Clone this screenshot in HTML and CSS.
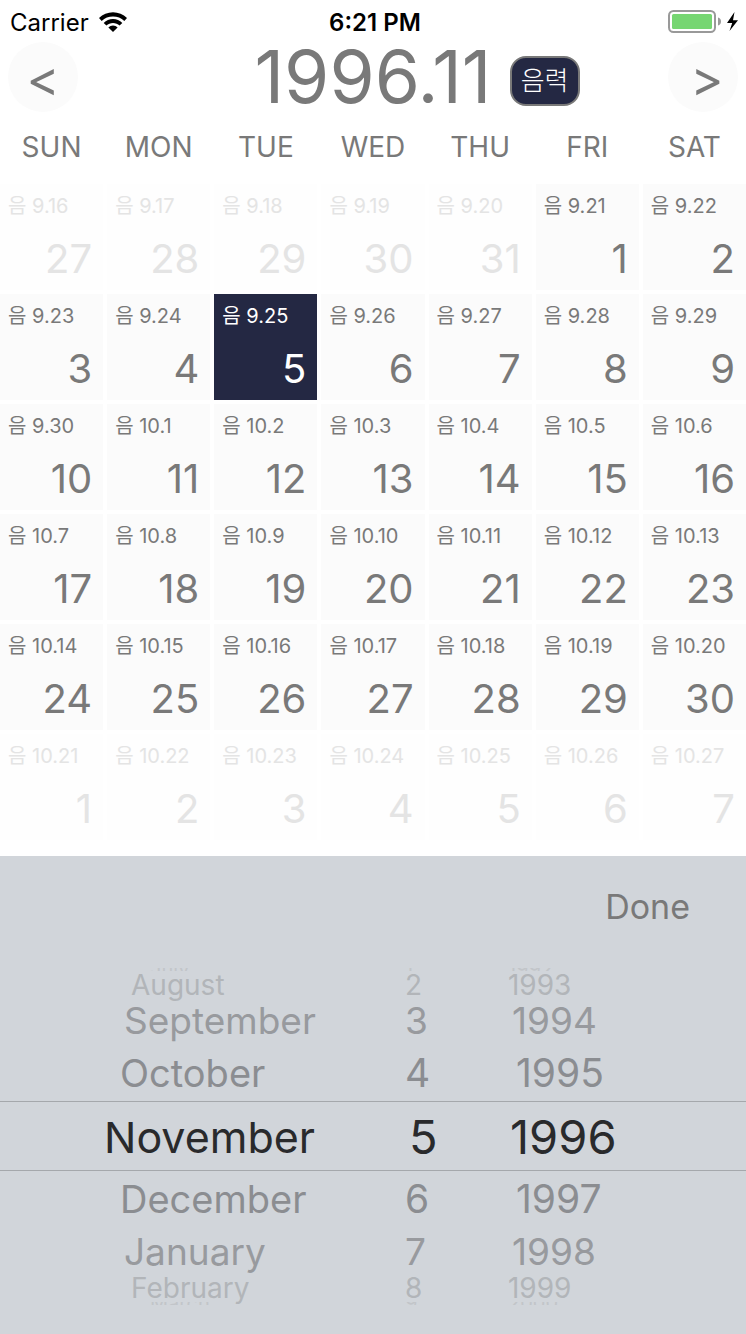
FILE: index.html
```html
<!DOCTYPE html>
<html lang="ko">
<head>
<meta charset="utf-8">
<meta name="viewport" content="width=device-width, initial-scale=1">
<title>1996.11</title>
<link rel="stylesheet" href="styles.css">
</head>
<body>
<div class="status">
  <div class="carrier">
    <span>Carrier</span>
    <svg class="wifi" viewBox="0 0 28 20" aria-hidden="true">
      <path d="M0 6.1C3.8 2.300 8.700.2 14 .2s10.200 2.100 14 5.900l-2.700 2.800C22.200 5.900 18.300 4.500 14 4.500S5.800 5.900 2.700 8.900z"/>
      <path d="M4.700 10.900C7.200 8.400 10.500 7 14 7s6.800 1.400 9.300 3.900l-2.700 2.700c-1.800-1.700-4.100-2.600-6.600-2.600s-4.800.9-6.600 2.600z"/>
      <path d="M9.400 15.400C10.600 14.100 12.200 13.400 14 13.400s3.400.7 4.600 2L14 20z"/>
    </svg>
  </div>
  <div class="clock">6:21 PM</div>
  <div class="power">
    <svg class="battery" viewBox="0 0 72 26" aria-hidden="true">
      <rect x="1" y="2" width="46" height="21" rx="4.500" fill="none" stroke="#999" stroke-width="2"/>
      <rect x="4" y="5" width="40" height="15" rx="1.500" fill="#76d672"/>
      <path d="M50 8.500c2 .5 3 2 3 4s-1 3.500-3 4z" fill="#999"/>
      <path d="M66.500 3L59 14h5.200L61.500 22 70 11.200h-5z" fill="#000"/>
    </svg>
  </div>
</div>

<header class="header">
  <button class="round" type="button" aria-label="Previous month">&lt;</button>
  <h1 class="title">1996.11</h1>
  <div class="header-end">
    <button class="lunar-toggle" type="button">음력</button>
    <button class="round next" type="button" aria-label="Next month">&gt;</button>
  </div>
</header>

<main>
<div class="weekdays">
  <span>SUN</span><span>MON</span><span>TUE</span><span>WED</span><span>THU</span><span>FRI</span><span>SAT</span>
</div>
<div class="days">
  <button class="day out" type="button"><small>음 9.16</small><b>27</b></button>
  <button class="day out" type="button"><small>음 9.17</small><b>28</b></button>
  <button class="day out" type="button"><small>음 9.18</small><b>29</b></button>
  <button class="day out" type="button"><small>음 9.19</small><b>30</b></button>
  <button class="day out" type="button"><small>음 9.20</small><b>31</b></button>
  <button class="day" type="button"><small>음 9.21</small><b>1</b></button>
  <button class="day" type="button"><small>음 9.22</small><b>2</b></button>

  <button class="day" type="button"><small>음 9.23</small><b>3</b></button>
  <button class="day" type="button"><small>음 9.24</small><b>4</b></button>
  <button class="day chosen" type="button" aria-pressed="true"><small>음 9.25</small><b>5</b></button>
  <button class="day" type="button"><small>음 9.26</small><b>6</b></button>
  <button class="day" type="button"><small>음 9.27</small><b>7</b></button>
  <button class="day" type="button"><small>음 9.28</small><b>8</b></button>
  <button class="day" type="button"><small>음 9.29</small><b>9</b></button>

  <button class="day" type="button"><small>음 9.30</small><b>10</b></button>
  <button class="day" type="button"><small>음 10.1</small><b>11</b></button>
  <button class="day" type="button"><small>음 10.2</small><b>12</b></button>
  <button class="day" type="button"><small>음 10.3</small><b>13</b></button>
  <button class="day" type="button"><small>음 10.4</small><b>14</b></button>
  <button class="day" type="button"><small>음 10.5</small><b>15</b></button>
  <button class="day" type="button"><small>음 10.6</small><b>16</b></button>

  <button class="day" type="button"><small>음 10.7</small><b>17</b></button>
  <button class="day" type="button"><small>음 10.8</small><b>18</b></button>
  <button class="day" type="button"><small>음 10.9</small><b>19</b></button>
  <button class="day" type="button"><small>음 10.10</small><b>20</b></button>
  <button class="day" type="button"><small>음 10.11</small><b>21</b></button>
  <button class="day" type="button"><small>음 10.12</small><b>22</b></button>
  <button class="day" type="button"><small>음 10.13</small><b>23</b></button>

  <button class="day" type="button"><small>음 10.14</small><b>24</b></button>
  <button class="day" type="button"><small>음 10.15</small><b>25</b></button>
  <button class="day" type="button"><small>음 10.16</small><b>26</b></button>
  <button class="day" type="button"><small>음 10.17</small><b>27</b></button>
  <button class="day" type="button"><small>음 10.18</small><b>28</b></button>
  <button class="day" type="button"><small>음 10.19</small><b>29</b></button>
  <button class="day" type="button"><small>음 10.20</small><b>30</b></button>

  <button class="day out" type="button"><small>음 10.21</small><b>1</b></button>
  <button class="day out" type="button"><small>음 10.22</small><b>2</b></button>
  <button class="day out" type="button"><small>음 10.23</small><b>3</b></button>
  <button class="day out" type="button"><small>음 10.24</small><b>4</b></button>
  <button class="day out" type="button"><small>음 10.25</small><b>5</b></button>
  <button class="day out" type="button"><small>음 10.26</small><b>6</b></button>
  <button class="day out" type="button"><small>음 10.27</small><b>7</b></button>
</div>
</main>

<section class="panel">
  <div class="toolbar"><button class="done" type="button">Done</button></div>
  <div class="picker">
    <ul class="wheel months" role="listbox" aria-label="Month">
      <li class="edge" role="option">July</li>
      <li class="far" role="option">August</li>
      <li class="mid" role="option">September</li>
      <li class="near" role="option">October</li>
      <li class="current" role="option" aria-selected="true">November</li>
      <li class="near" role="option">December</li>
      <li class="mid" role="option">January</li>
      <li class="far" role="option">February</li>
      <li class="edge" role="option">March</li>
    </ul>
    <ul class="wheel dates" role="listbox" aria-label="Day">
      <li class="edge" role="option">1</li>
      <li class="far" role="option">2</li>
      <li class="mid" role="option">3</li>
      <li class="near" role="option">4</li>
      <li class="current" role="option" aria-selected="true">5</li>
      <li class="near" role="option">6</li>
      <li class="mid" role="option">7</li>
      <li class="far" role="option">8</li>
      <li class="edge" role="option">9</li>
    </ul>
    <ul class="wheel years" role="listbox" aria-label="Year">
      <li class="edge" role="option">1992</li>
      <li class="far" role="option">1993</li>
      <li class="mid" role="option">1994</li>
      <li class="near" role="option">1995</li>
      <li class="current" role="option" aria-selected="true">1996</li>
      <li class="near" role="option">1997</li>
      <li class="mid" role="option">1998</li>
      <li class="far" role="option">1999</li>
      <li class="edge" role="option">2000</li>
    </ul>
  </div>
</section>
</body>
</html>
```
FILE: styles.css
```css
* { box-sizing: border-box; }

body {
  margin: 0;
  min-height: 100vh;
  display: flex;
  flex-direction: column;
  background: #fff;
  color: #797979;
  font-family: Inter, "Noto Sans CJK KR", sans-serif;
}

button {
  margin: 0;
  padding: 0;
  border: 0;
  background: none;
  color: inherit;
  font: inherit;
  cursor: pointer;
}

/* Status bar */
.status {
  display: grid;
  grid-template-columns: 1fr auto 1fr;
  align-items: center;
  height: 42px;
  padding: 2px 6px 0 10px;
  color: #000;
  font-size: 24px;
}
.carrier { display: flex; align-items: center; gap: 10px; }
.wifi { width: 28px; height: 20px; }
.clock { font-weight: 600; }
.power { display: flex; justify-content: flex-end; }
.battery { width: 72px; height: 26px; }

/* Month header */
.header {
  display: grid;
  grid-template-columns: 1fr auto 1fr;
  align-items: center;
  height: 70px;
  padding: 0 8px;
}
.round {
  width: 70px;
  height: 70px;
  border-radius: 50%;
  background: #fbfbfb;
  font-size: 50px;
  line-height: 72px;
}
.next { padding-left: 8px; }
.title {
  margin: 0;
  font-size: 73px;
  font-weight: 400;
  line-height: 70px;
}
.header-end {
  display: flex;
  align-items: center;
  justify-content: space-between;
  padding-left: 18px;
}
.lunar-toggle {
  width: 70px;
  height: 50px;
  margin-top: 8px;
  border: 2px solid #797979;
  border-radius: 16px;
  background: #242843;
  color: #fff;
  font-size: 26px;
  font-weight: 300;
  line-height: 46px;
}

/* Calendar */
.weekdays, .days {
  display: grid;
  grid-template-columns: repeat(7, 1fr);
  column-gap: 4px;
}
.weekdays {
  height: 72px;
  font-size: 28px;
  line-height: 70px;
  text-align: center;
}
.days { row-gap: 4px; margin-bottom: 16px; }
.day {
  display: flex;
  flex-direction: column;
  justify-content: space-between;
  height: 106px;
  padding: 10px 11px 7px 8px;
  background: #fbfbfb;
  text-align: left;
}
.day small { font-size: 20px; font-weight: 400; line-height: 24px; white-space: nowrap; }
.day b { align-self: flex-end; font-size: 40px; font-weight: 400; line-height: 48px; }
.out { background: #fefefe; color: #e4e4e4; }
.chosen { background: #242843; color: #fff; }

/* Date picker */
.panel { flex: 1; background: #d1d5da; }
.toolbar {
  display: flex;
  justify-content: flex-end;
  padding: 27px 56px 37px;
}
.done { font-size: 34px; line-height: 48px; }
.picker {
  display: grid;
  grid-template-columns: 50% 13% 1fr;
}
.wheel { margin: 0; padding: 0; list-style: none; }
.wheel li { white-space: nowrap; }
.wheel .edge { height: 3px; padding-left: 38px; overflow: hidden; color: #c2c5c9; font-size: 20px; line-height: 3px; }
.wheel .far { height: 28px; padding-left: 38px; color: #b2b5b9; font-size: 28px; line-height: 28px; }
.wheel .mid { height: 44px; padding-left: 42px; color: #989a9e; font-size: 37px; line-height: 44px; }
.wheel .near { height: 59px; padding-left: 46px; color: #8b8d91; font-size: 39px; line-height: 60px; }
.wheel .current {
  height: 70px;
  margin-top: -1px;
  padding-left: 40px;
  border-top: 1px solid #a5a8ac;
  border-bottom: 1px solid #a5a8ac;
  color: #292a2c;
  font-size: 47px;
  line-height: 70px;
}
.wheel .current + .near { line-height: 56px; }
.months .edge { padding-left: 150px; }
.months .far { padding-left: 131px; }
.months .mid { padding-left: 124px; }
.months .near { padding-left: 120px; font-size: 38px; }
.months .current { padding-left: 104px; font-size: 43px; }
.dates .edge, .dates .far, .dates .mid, .dates .near { padding-left: 32px; }
.dates .current { padding-left: 36px; }
```
